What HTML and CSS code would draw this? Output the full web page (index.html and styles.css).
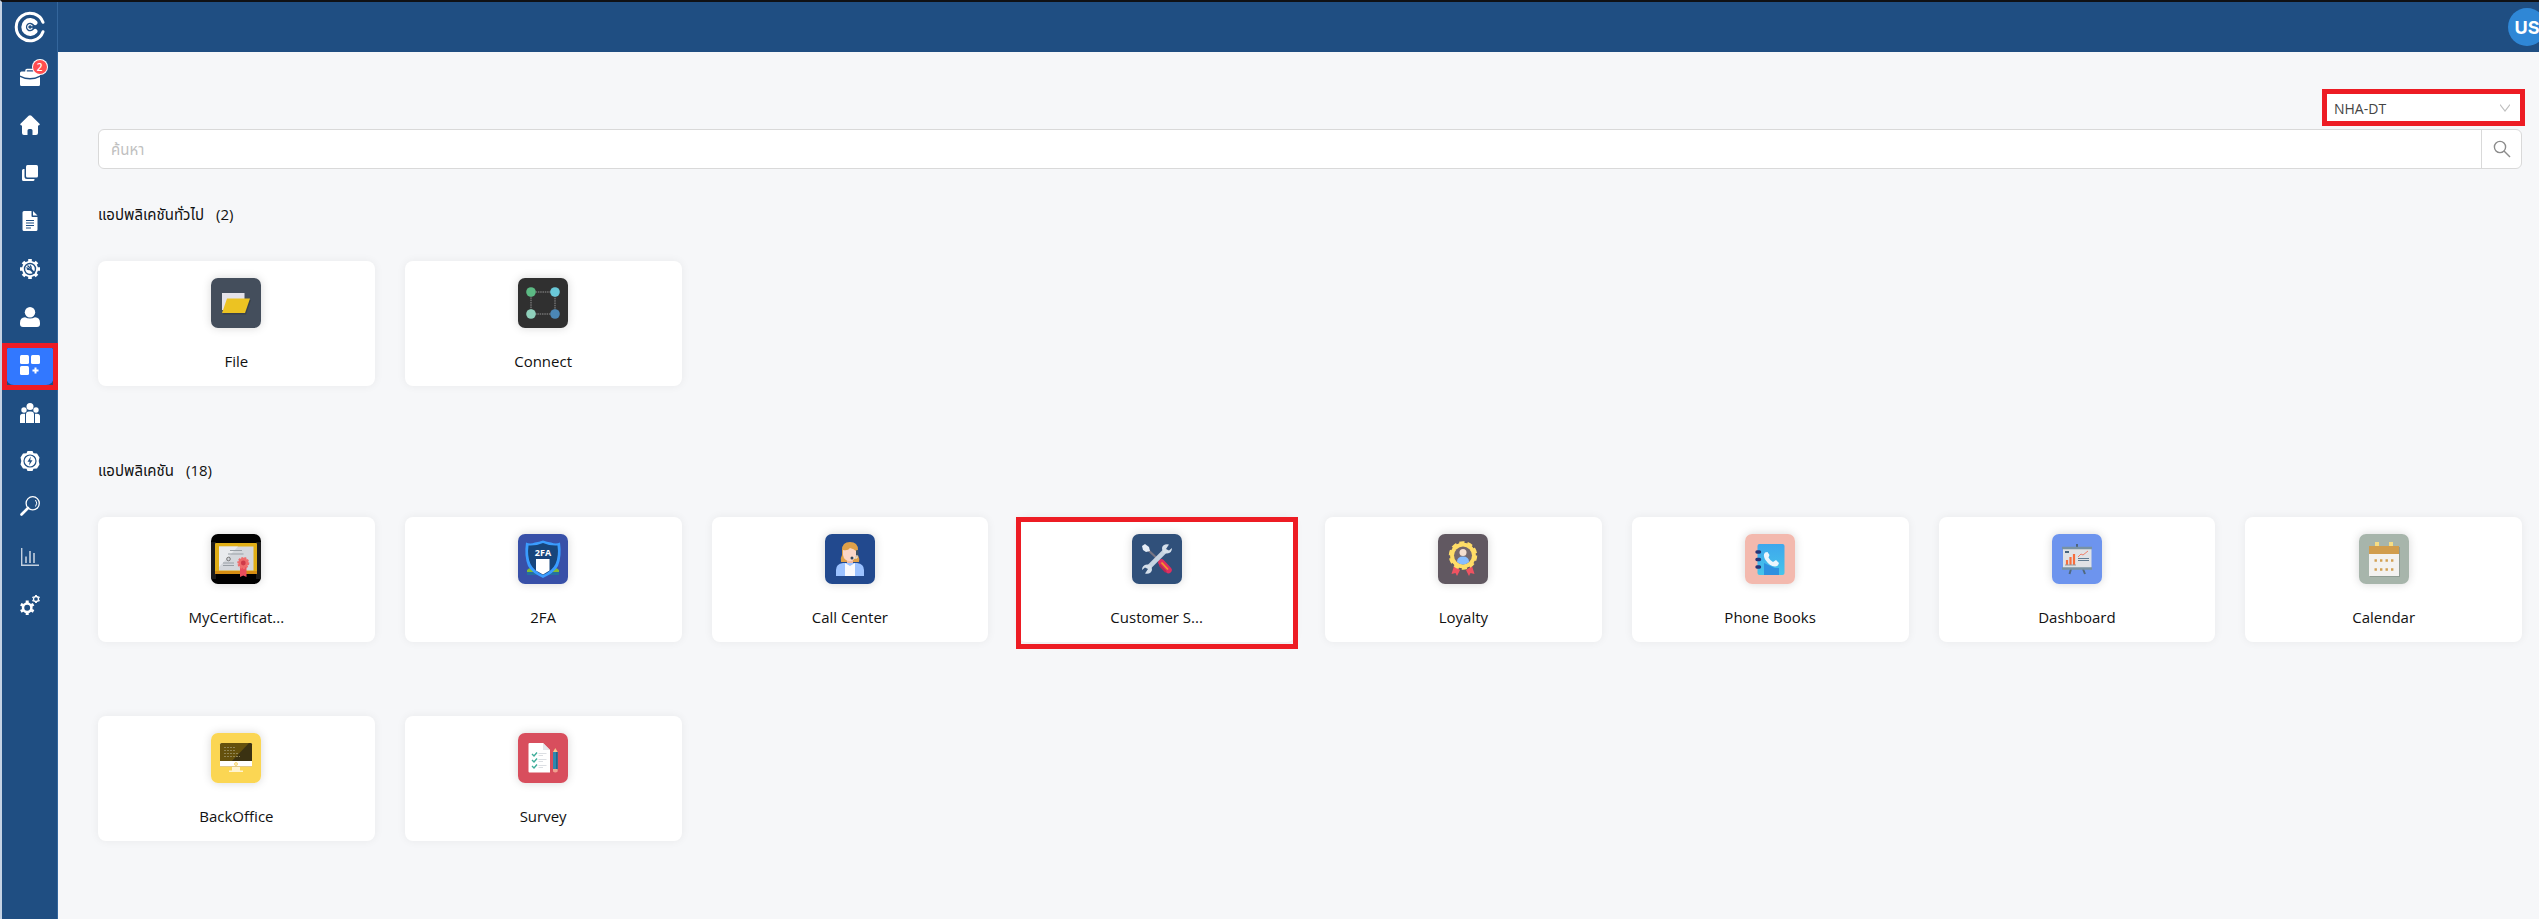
FILE: index.html
```html
<!DOCTYPE html>
<html lang="th">
<head>
<meta charset="utf-8">
<title>แอปพลิเคชัน</title>
<link rel="stylesheet" href="styles.css">
</head>
<body>
<div class="app">
  <aside class="sidebar">
    <a class="logo" href="#" aria-label="Home page">
      <svg width="32" height="32" viewBox="0 0 32 32" fill="none" stroke="#fff" stroke-linecap="round">
        <path d="M29 11.300A13.800 13.800 0 1 0 29 20.700" stroke-width="3"/>
        <path d="M21.300 11.800A6.600 6.600 0 1 0 21.300 20.200" stroke-width="4.600"/>
        <path d="M18 14.800A2.300 2.300 0 1 0 18 17.200" stroke-width="1.200"/>
      </svg>
    </a>
    <nav class="menu">
      <button class="item" aria-label="Work">
        <svg viewBox="0 0 20 20"><path d="M6 5V3.500Q6 2.500 7 2.500H13Q14 2.500 14 3.500V5" fill="none" stroke="#fff" stroke-width="1.500"/><path d="M1.500 4.500H18.500Q20 4.500 20 6V8.500Q10 13.500 0 8.500V6Q0 4.500 1.500 4.500ZM0 10Q10 15 20 10V17.500Q20 19 18.500 19H1.500Q0 19 0 17.500Z"/></svg>
        <span class="badge">2</span>
      </button>
      <button class="item" aria-label="Home">
        <svg viewBox="0 0 20 20"><path d="M8.600.7Q10-.4 11.400.7L19.500 8.700Q20.300 10.200 18.700 10.500H18V18Q18 20 16 20H12.500V15.500Q12.500 14 11 14H9Q7.500 14 7.500 15.500V20H4Q2 20 2 18V10.500H1.300Q-.3 10.200.5 8.700Z"/></svg>
      </button>
      <button class="item" aria-label="Copies">
        <svg viewBox="0 0 20 20"><rect x="6" y="2" width="12" height="12.500" rx="1.500"/><path d="M4.500 6H3.500Q2 6 2 7.500V16.500Q2 18 3.500 18H13Q14.500 18 14.500 16.500V16H7Q4.500 16 4.500 13.500Z"/></svg>
      </button>
      <button class="item" aria-label="Documents">
        <svg viewBox="0 0 20 20"><path d="M4 0H11.500V5Q11.500 6 12.500 6H17.500V18.500Q17.500 20 16 20H4Q2.500 20 2.500 18.500V1.500Q2.500 0 4 0ZM13 0L17.500 4.500H13Z"/><path class="cut" d="M6 9.500H14M6 12H14M6 14.500H14M6 17H11" stroke-width="1.200"/></svg>
      </button>
      <button class="item" aria-label="Maintenance">
        <svg viewBox="0 0 20 20"><circle cx="10" cy="10" r="8"/><path d="M10 0V20M0 10H20M3 3L17 17M17 3L3 17" stroke="#fff" stroke-width="3.600"/><circle class="cut" cx="10" cy="10" r="5.500" stroke-width="1.400"/><path class="cut" d="M10 9.500L14.500 14.500" stroke-width="2"/><path class="cut" d="M7.500 6.500L9.500 8.500L8.500 10L6.500 8.500M10 6.500Q12 8 10.500 10.500Q8.500 11 7 10" stroke-width="1.300"/></svg>
      </button>
      <button class="item" aria-label="Profile">
        <svg viewBox="0 0 20 20"><circle cx="10" cy="5.200" r="5.200"/><path d="M5 10.300Q10 12.700 15 10.300Q20 10.500 20 16V17Q20 20 17 20H3Q0 20 0 17V16Q0 10.500 5 10.300Z"/></svg>
      </button>
      <button class="item active" aria-label="Applications" aria-current="page">
        <svg viewBox="0 0 20 20"><rect width="9" height="9" rx="1.500"/><rect x="11" width="9" height="9" rx="1.500"/><rect y="11" width="9" height="9" rx="1.500"/><path d="M14.500 12.500H16.500V14.500H18.500V16.500H16.500V18.500H14.500V16.500H12.500V14.500H14.500Z"/></svg>
        <span class="mark"></span>
      </button>
      <button class="item" aria-label="Groups">
        <svg viewBox="0 0 20 20"><circle cx="10" cy="3.500" r="3.500"/><circle cx="4" cy="7" r="2.700"/><circle cx="16" cy="7" r="2.700"/><path d="M6 20V11.500Q6 8.500 9 8.500H11Q14 8.500 14 11.500V20ZM5 20H0V13.500Q0 10.700 3 10.700H5ZM15 20H20V13.500Q20 10.700 17 10.700H15Z"/></svg>
      </button>
      <button class="item" aria-label="Automation">
        <svg viewBox="0 0 20 20"><path d="M7.500 0H12.500L13.500 2.200L17 2.500L19.500 6.500L18.700 10L19.500 13.500L17 17.500L13.500 17.800L12.500 20H7.500L6.500 17.800L3 17.500L.5 13.500L1.300 10L.5 6.500L3 2.500L6.500 2.200Z"/><circle class="cut" cx="10" cy="10" r="6" stroke-width="1.200"/><path d="M10.800 5.500L7.500 10.700H9.700L9 14.500L12.500 9.300H10.200Z" fill="#1f4e82"/></svg>
      </button>
      <button class="item raised" aria-label="Search">
        <svg viewBox="0 0 20 20"><circle cx="12.700" cy="7.300" r="6.600" fill="none" stroke="#fff" stroke-width="1.300"/><path d="M15.500 4Q18 7 15.500 10.500" fill="none" stroke="#fff"/><path d="M8 12L1.500 18.500" stroke="#fff" stroke-width="2.600" stroke-linecap="round"/></svg>
      </button>
      <button class="item" aria-label="Reports">
        <svg viewBox="0 0 20 20"><path d="M1.700 1V18.200H19" fill="none" stroke="#c3d0df" stroke-width="1.400"/><path d="M6 16V9.500M10 16V4M14 16V6" stroke="#c3d0df" stroke-width="1.600"/></svg>
      </button>
      <button class="item" aria-label="Settings">
        <svg class="outline" viewBox="0 0 20 20"><circle cx="7.200" cy="12.800" r="4.200" stroke-width="2.500"/><path d="M7.200 5.500V8M7.200 17.500V20M.8 9.200L3 10.400M11.400 15.200L13.600 16.400M.8 16.400L3 15.200M11.400 10.400L13.600 9.200" stroke-width="3"/><circle cx="16" cy="4" r="2.500" stroke-width="1.300"/><path d="M16 0V1.200M16 6.800V8M12.500 2L13.500 2.600M18.500 5.400L19.500 6M12.500 6L13.500 5.400M18.500 2.600L19.500 2" stroke-width="1.800"/></svg>
      </button>
    </nav>
  </aside>

  <div class="body">
    <header class="topbar"><button class="avatar" aria-label="User menu">US</button></header>
    <main class="content">
      <div class="tools">
        <div class="org">
          <select class="org-select" aria-label="Organization"><option>NHA-DT</option></select>
          <svg class="chevron" viewBox="0 0 10 8" width="10" height="8"><path d="M0 .5L5 7L10 .5" fill="none" stroke="#bfbfbf" stroke-width="1.200"/></svg>
          <span class="mark"></span>
        </div>
      </div>
      <form class="search">
        <input class="search-input" type="text" placeholder="ค้นหา" aria-label="ค้นหา">
        <button class="search-button" type="button" aria-label="ค้นหา">
          <svg viewBox="0 0 18 18" width="18" height="18" fill="none" stroke="#8c8c8c" stroke-width="1.400"><circle cx="7" cy="7" r="5.600"/><path d="M11 11L17 17"/></svg>
        </button>
      </form>

      <section>
        <h2 class="heading"><span>แอปพลิเคชันทั่วไป</span><span>(2)</span></h2>
        <div class="grid">
          <a class="card" href="#">
            <svg class="icon" viewBox="0 0 50 50"><rect width="50" height="50" fill="#444e5c"/><path d="M11 15H33.500V32H11Z" fill="#e5e3e9"/><path d="M17 22H40L35 36.500H12Z" fill="#38404b"/><path d="M16 20.500H39L34 35H11Z" fill="#ecc322"/></svg>
            <span>File</span>
          </a>
          <a class="card" href="#">
            <svg class="icon" viewBox="0 0 50 50"><rect width="50" height="50" fill="#303030"/><path d="M13 14H37V36H13Z" fill="none" stroke="#aaa" stroke-width=".8" stroke-dasharray="1.500 .8"/><circle cx="13" cy="14" r="4.800" fill="#5cba84"/><circle cx="37" cy="14" r="4.800" fill="#69c8d8"/><circle cx="13" cy="36" r="4.800" fill="#8fd0bb"/><circle cx="37" cy="36" r="4.800" fill="#4b87b5"/></svg>
            <span>Connect</span>
          </a>
        </div>
      </section>

      <section class="all">
        <h2 class="heading"><span>แอปพลิเคชัน</span><span>(18)</span></h2>
        <div class="grid">
          <a class="card" href="#">
            <svg class="icon" viewBox="0 0 50 50"><rect width="50" height="50" fill="#000"/><path d="M0 8H5V45H0ZM45 8H50V45H45Z" fill="#1b1b1b"/><rect x="4" y="9" width="42" height="31" rx="1" fill="#e0ae16"/><path d="M4 37H46V40H4Z" fill="#d58d12"/><rect x="8" y="12.500" width="34.500" height="24" fill="#d4d7dc"/><path d="M8 12.500H27L8 33Z" fill="#e9ebee"/><path d="M19 16.500H31M17 20H32.500M12 29H23M12 31.500H23" stroke="#999fa5"/><circle cx="17.500" cy="25" r="1.800" fill="none" stroke="#777" stroke-width="1"/><path d="M29 32H35.500V43L32.200 41.500L29 43Z" fill="#ea4e5c"/><circle cx="32.300" cy="29" r="5" fill="#ef6c6c" stroke="#ef6c6c" stroke-width="2" stroke-dasharray="2 1"/><circle cx="32.300" cy="29" r="2.400" fill="#cf3948"/></svg>
            <span>MyCertificat...</span>
          </a>
          <a class="card" href="#">
            <svg class="icon" viewBox="0 0 50 50"><rect width="50" height="50" fill="#3850a8"/><path d="M9 36Q13 32 17 36V39H9ZM33 36Q37 32 41 36V39H33Z" fill="#80bd34"/><path d="M9 38H41V41H9Z" fill="#2470a2"/><path d="M8 8.500Q12 10.500 17 8.500Q21 8 25 6.500Q29 8 33 8.500Q38 10.500 42 8.500Q44 22 40 32Q36 39 25 44Q14 39 10 32Q6 22 8 8.500Z" fill="#3a9cff"/><path d="M10.500 11.500Q18 12 25 9Q32 12 39.500 11.500Q41 22 37.500 30Q34 37 25 41Q16 37 12.500 30Q9 22 10.500 11.500Z" fill="#17457c"/><path d="M18 25H31.500V36.500L25 40.500L18 36.500Z" fill="#fff"/><text x="25" y="21.500" class="icon-text">2FA</text></svg>
            <span>2FA</span>
          </a>
          <a class="card" href="#">
            <svg class="icon" viewBox="0 0 50 50"><rect width="50" height="50" fill="#22498e"/><path d="M17 16Q17 8 25 8Q33 8 33 16V21Q35 25 34 28H16Q15 24 17 21Z" fill="#dfa04a"/><path d="M22 24H28V30H22Z" fill="#efb9a4"/><path d="M18 16Q23 17 25 14Q29 15 31 17V22Q29 27 25 27Q19 27 18 21Z" fill="#fbd6c6"/><path d="M11 42V36Q11 30 18 29H32Q39 30 39 36V42Z" fill="#9cc2ff"/><path d="M20 29L25 32L30 29V42H20Z" fill="#faf9fb"/><rect x="31" y="16" width="2.500" height="6" rx="1" fill="#3f5264"/><path d="M32 21V24H27" fill="none" stroke="#e8eef4"/><circle cx="27" cy="24" r="1.500" fill="#34495b"/></svg>
            <span>Call Center</span>
          </a>
          <a class="card" href="#">
            <svg class="icon" viewBox="0 0 50 50"><rect width="50" height="50" fill="#30507a"/><path d="M15 15L29 28" stroke="#777584" stroke-width="2.200"/><path d="M10 12L13 10L17 13L18 17L14 18L11 16Z" fill="#e6edf7"/><path d="M29.500 28.500L36.500 36" stroke="#df2f60" stroke-width="6.500" stroke-linecap="round"/><path d="M27.500 31L34 38" stroke="#b92854" stroke-width="2"/><path d="M29.500 28.500L36 35.500" stroke="#f39b28" stroke-width="1.700"/><path d="M34 16L16 34" stroke="#c6d3e1" stroke-width="4.600"/><path d="M37 10.500Q31 9.500 30 14Q30 19.500 35 19.500Q40 19 40 14L37 16.500L34 15ZM13 39.500Q19 40.500 20 36Q20 30.500 15 30.500Q10 31 10 36L13 33.500L16 35Z" fill="#d5dfea"/></svg>
            <span>Customer S...</span>
            <span class="mark"></span>
          </a>
          <a class="card" href="#">
            <svg class="icon" viewBox="0 0 50 50"><rect width="50" height="50" fill="#615861"/><path d="M16 32L22 36L19 42L17.500 39L13.500 40ZM34 32L28 36L31 42L32.500 39L36.500 40Z" fill="#ef5361"/><circle cx="25" cy="21.500" r="12.500" fill="#ffdd67" stroke="#ffdd67" stroke-width="3.500" stroke-dasharray="5 2.854"/><circle cx="25" cy="21.500" r="12.800" fill="#ffdd67"/><circle cx="25" cy="21.500" r="9" fill="#75676d"/><circle cx="25" cy="18.500" r="3.500" fill="#f5ded0"/><path d="M19 28Q19 22.500 25 22.500Q31 22.500 31 28Q25 33 19 28Z" fill="#88bdff"/></svg>
            <span>Loyalty</span>
          </a>
          <a class="card" href="#">
            <svg class="icon" viewBox="0 0 50 50"><defs><linearGradient id="book" x2="0" y2="1"><stop stop-color="#3da7ed"/><stop offset="1" stop-color="#46c4ea"/></linearGradient></defs><rect width="50" height="50" fill="#f3b9ae"/><rect x="12.500" y="10" width="27" height="31" rx="2" fill="url(#book)"/><path d="M19 29L30 34H34V41H19Z" fill="#2f90e0"/><path d="M12 18H14.500M12 25.500H14.500M12 33H14.500" stroke="#253477" stroke-width="3.400" stroke-linecap="round"/><path d="M20 18.500Q17.500 21 20.500 26Q24.500 32 30 32.500Q33 32.500 34 29L31 26L28 28Q25 26.500 23.500 23.500L24.500 21L22.500 18Z" fill="#ecf5fc"/></svg>
            <span>Phone Books</span>
          </a>
          <a class="card" href="#">
            <svg class="icon" viewBox="0 0 50 50"><rect width="50" height="50" fill="#6d94ee"/><path d="M25 10V14" stroke="#4e6681" stroke-width="2"/><path d="M19 35L17.500 40M31 35L33 40" stroke="#516a80" stroke-width="2"/><rect x="11" y="15" width="28.500" height="19" fill="#e0e2e5"/><path d="M10 14H40M10 34.500H40" stroke="#7892a3" stroke-width="2.500"/><path d="M13 18H17" stroke="#46647e" stroke-width="2"/><path d="M15 31V26M18.500 31V23M22 31V20" stroke="#f66d3c" stroke-width="2.200"/><path d="M13 31H24" stroke="#8f9aa2"/><path d="M26 23L29 20L31 21L36 17" fill="none" stroke="#ee806a"/><path d="M26 24.500H37M26 26.500H37" stroke="#617b91"/></svg>
            <span>Dashboard</span>
          </a>
          <a class="card" href="#">
            <svg class="icon" viewBox="0 0 50 50"><rect width="50" height="50" fill="#a7b5ab"/><rect x="11" y="13" width="30" height="30" fill="#8f9c93"/><path d="M16 8H20V13H16ZM30 8H34V13H30Z" fill="#f7dd83"/><rect x="10" y="12" width="30" height="30" fill="#f3f2f0"/><rect x="10" y="12" width="30" height="8" fill="#d19d4d"/><path d="M15.500 26.500H35M15.500 35.500H35" stroke="#d2a052" stroke-width="2.400" stroke-dasharray="2.400 3.100"/></svg>
            <span>Calendar</span>
          </a>
          <a class="card" href="#">
            <svg class="icon" viewBox="0 0 50 50"><rect width="50" height="50" fill="#fbd653"/><rect x="9" y="10" width="32" height="24" rx="1.500" fill="#fff"/><path d="M9 33.500H41" stroke="#e0c98b"/><path d="M10.500 10H39.500Q41 10 41 11.500V28H9V11.500Q9 10 10.500 10Z" fill="#65510d"/><path d="M38 10H39.500Q41 10 41 11.500V28H21Z" fill="#3b3212"/><path d="M13 14.500H25M13 17.500H24M13 20.500H27M13 23.500H29" stroke="#8f8455" stroke-dasharray="2 1"/><circle cx="25" cy="31" r="1.500" fill="#fff1bd" stroke="#f2cc59" stroke-width=".8"/><path d="M21 34H29V37.500H32V39H18V37.500H21Z" fill="#fff4cf"/></svg>
            <span>BackOffice</span>
          </a>
          <a class="card" href="#">
            <svg class="icon" viewBox="0 0 50 50"><rect width="50" height="50" fill="#d84e5d"/><path d="M11.500 10H25L32 17V39.500H11.500Q10.500 39.500 10.500 38.500V11Q10.500 10 11.500 10Z" fill="#fff"/><path d="M25 10L32 17H25Z" fill="#e4e5ea"/><path d="M14 21L16 23L19 19.500M14 27L16 29L19 25.500M14 33L16 35L19 31.500" fill="none" stroke="#3fae9a" stroke-width="1.400"/><path d="M20.500 20.500H28.500M20.500 22.500H25M20.500 26.500H28.500M20.500 28.500H25M20.500 32.500H28.500M20.500 34.500H25" stroke="#d8dbe0" stroke-width=".9"/><path d="M35 19L37.300 15L39.700 19Z" fill="#f2c68d"/><rect x="35" y="19" width="4.700" height="18" fill="#2e87ae"/><path d="M38.800 19V37" stroke="#1e688e" stroke-width="1.600"/><path d="M35 36H39.700V38.500Q37.300 40.500 35 38.500Z" fill="#f0a18e"/></svg>
            <span>Survey</span>
          </a>
        </div>
      </section>
    </main>
  </div>
</div>
</body>
</html>
```
FILE: styles.css
```css
* {
  box-sizing: border-box;
}

body {
  margin: 0;
  background: #f6f7f9;
  color: #111;
  font-family: "Open Sans", "Noto Sans Thai", "Noto Sans", sans-serif;
  font-size: 15px;
}

button,
input,
select {
  margin: 0;
  padding: 0;
  border: 0;
  font: inherit;
}

.app {
  display: flex;
  min-height: 100vh;
  overflow: hidden;
  border-top: 2px solid #101114;
  border-left: 2px solid #c5d3e4;
}

.sidebar {
  flex: none;
  width: 56px;
  border-right: 1px solid #34669c;
  background: #1f4e82;
}

.logo {
  display: flex;
  align-items: center;
  justify-content: center;
  height: 50px;
}

.menu {
  display: flex;
  flex-direction: column;
  align-items: center;
  gap: 8px;
  padding-top: 5px;
}

.item {
  position: relative;
  display: flex;
  align-items: center;
  justify-content: center;
  width: 48px;
  height: 40px;
  border-radius: 8px;
  background: none;
}

.item svg {
  width: 20px;
  height: 20px;
  fill: #fff;
}

.item .outline {
  fill: none;
  stroke: #fff;
}

.item .cut {
  fill: none;
  stroke: #1f4e82;
}

.item.active {
  background: #3278ff;
}

.item.raised {
  padding-bottom: 6px;
}

.badge {
  position: absolute;
  top: 3px;
  right: 7px;
  width: 14px;
  height: 14px;
  border-radius: 50%;
  background: #ff4d4f;
  box-shadow: 0 0 0 1px #fff;
  color: #fff;
  font-size: 10px;
  font-weight: 600;
  line-height: 14px;
  text-align: center;
}

.mark {
  position: absolute;
  border: 5px solid #ed1c24;
  pointer-events: none;
}

.item .mark {
  inset: -2px -4px -5px;
}

.body {
  display: flex;
  flex: 1;
  flex-direction: column;
  min-width: 0;
}

.topbar {
  display: flex;
  flex: none;
  align-items: center;
  justify-content: flex-end;
  height: 50px;
  background: #1f4e82;
}

.avatar {
  flex: none;
  width: 38px;
  height: 38px;
  margin-right: -7px;
  border-radius: 50%;
  background: #2f87d6;
  color: #fff;
  font-family: Inter, sans-serif;
  font-size: 18px;
  font-weight: 700;
}

.content {
  padding: 38px 17px 40px 40px;
}

.tools {
  display: flex;
  justify-content: flex-end;
}

.org {
  position: relative;
  width: 200px;
  height: 36px;
}

.org-select {
  width: 100%;
  height: 100%;
  padding: 0 12px;
  appearance: none;
  background: #fff;
  color: #444;
  font-size: 14px;
}

.chevron {
  position: absolute;
  top: 14px;
  right: 12px;
}

.org .mark {
  inset: -1px -3px 0 0;
}

.search {
  display: flex;
  height: 40px;
  margin-top: 3px;
  border: 1px solid #d9d9d9;
  border-radius: 6px;
  background: #fff;
  overflow: hidden;
}

.search-input {
  flex: 1;
  min-width: 0;
  padding: 0 12px;
  background: none;
  outline: 0;
}

.search-input::placeholder {
  color: #bfbfbf;
}

.search-button {
  display: flex;
  align-items: center;
  justify-content: center;
  width: 40px;
  border-left: 1px solid #d9d9d9;
  background: none;
}

.heading {
  display: flex;
  gap: 12px;
  margin: 34px 0 36px;
  font-size: 15px;
  font-weight: 400;
  line-height: 22px;
}

.all .heading {
  margin-top: 73px;
}

.grid {
  display: grid;
  grid-template-columns: repeat(8, 1fr);
  gap: 74px 30px;
}

.card {
  position: relative;
  display: flex;
  flex-direction: column;
  align-items: center;
  gap: 22px;
  height: 125px;
  padding-top: 17px;
  border-radius: 8px;
  background: #fff;
  box-shadow: 0 0 10px rgba(0, 0, 0, 0.06);
  color: #111;
  line-height: 22px;
  text-decoration: none;
}

.card .mark {
  inset: 0 -3px -7px -2px;
}

.icon {
  width: 50px;
  height: 50px;
  border-radius: 7px;
  box-shadow: 0 0 10px rgba(0, 0, 0, 0.16);
}

.icon-text {
  fill: #fff;
  font-family: "Open Sans", sans-serif;
  font-size: 9px;
  font-weight: 700;
  text-anchor: middle;
}
```
